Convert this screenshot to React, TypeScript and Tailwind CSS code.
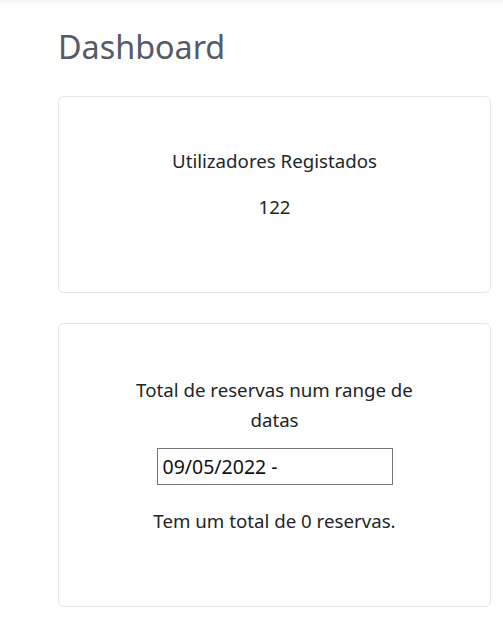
export default function App() {
  return (
    <div
      className="min-h-[622px] bg-white"
      style={{ fontFamily: '"Noto Sans", "Open Sans", sans-serif' }}
    >
      <div className="h-[5px] bg-gradient-to-b from-[#f3f3f3] to-white" />
      <div className="pl-[58px] pr-[12px]">
        <h1 className="mt-[19px] text-[32.3px] leading-[44px] font-normal text-[#555a66]">
          Dashboard
        </h1>

        <div className="mt-[28px] w-[433px] h-[197px] rounded-[6px] border border-[#e5e5ef] flex flex-col items-center pt-[50px] text-[#212529]">
          <p className="text-[18.7px] leading-[28px]">Utilizadores Registados</p>
          <p className="mt-[18px] text-[18.7px] leading-[28px]">122</p>
        </div>

        <div className="mt-[30px] w-[433px] h-[284px] rounded-[6px] border border-[#e5e5ef] flex flex-col items-center pt-[51px] text-[#212529]">
          <p className="w-[300px] text-center text-[18.7px] leading-[30px]">
            Total de reservas num range de datas
          </p>
          <input
            type="text"
            defaultValue="09/05/2022 - "
            className="mt-[13px] w-[236px] h-[37px] border border-[#767676] px-[5px] text-[19.5px] text-[#111] outline-none"
          />
          <p className="mt-[22px] text-[18.7px] leading-[28px]">Tem um total de 0 reservas.</p>
        </div>
      </div>
    </div>
  );
}
